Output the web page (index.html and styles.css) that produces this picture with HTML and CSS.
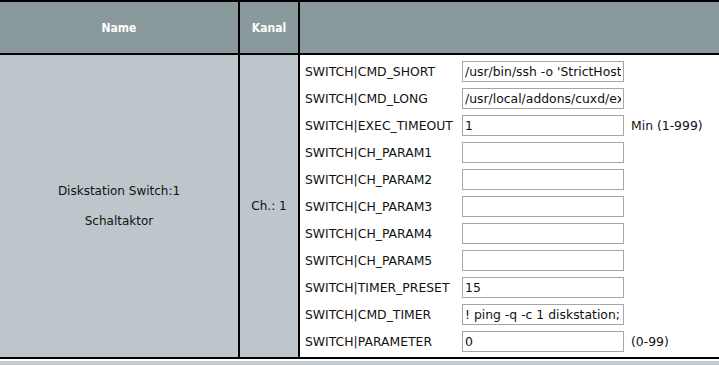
FILE: index.html
```
<!DOCTYPE html>
<html>
<head>
  <title>CUxD Geräteparameter</title>
  <link rel="stylesheet" href="styles.css">
</head>
<body>
  <table class="devices">
    <tr class="head">
      <th class="col-name">Name</th>
      <th class="col-chan">Kanal</th>
      <th class="col-params"></th>
    </tr>
    <tr class="device">
      <td class="col-name">
        <div class="name-box">
          <div>Diskstation Switch:1</div>
          <div>Schaltaktor</div>
        </div>
      </td>
      <td class="col-chan">Ch.: 1</td>
      <td class="col-params">
        <div class="params">
          <span class="lbl">SWITCH|CMD_SHORT</span>
          <input type="text" value="/usr/bin/ssh -o 'StrictHostKeyChecking=no' admin@diskstation">
          <span class="unit"></span>

          <span class="lbl">SWITCH|CMD_LONG</span>
          <input type="text" value="/usr/local/addons/cuxd/extra/wol.sh">
          <span class="unit"></span>

          <span class="lbl">SWITCH|EXEC_TIMEOUT</span>
          <input type="text" value="1">
          <span class="unit">Min (1-999)</span>

          <span class="lbl">SWITCH|CH_PARAM1</span>
          <input type="text" value="">
          <span class="unit"></span>

          <span class="lbl">SWITCH|CH_PARAM2</span>
          <input type="text" value="">
          <span class="unit"></span>

          <span class="lbl">SWITCH|CH_PARAM3</span>
          <input type="text" value="">
          <span class="unit"></span>

          <span class="lbl">SWITCH|CH_PARAM4</span>
          <input type="text" value="">
          <span class="unit"></span>

          <span class="lbl">SWITCH|CH_PARAM5</span>
          <input type="text" value="">
          <span class="unit"></span>

          <span class="lbl">SWITCH|TIMER_PRESET</span>
          <input type="text" value="15">
          <span class="unit"></span>

          <span class="lbl">SWITCH|CMD_TIMER</span>
          <input type="text" value="! ping -q -c 1 diskstation; echo $?">
          <span class="unit"></span>

          <span class="lbl">SWITCH|PARAMETER</span>
          <input type="text" value="0">
          <span class="unit">(0-99)</span>
        </div>
      </td>
    </tr>
  </table>
  <div class="footer-strip"></div>
</body>
</html>
```

FILE: styles.css
```
html { background:#c3cbce; }

body
{
  margin:0;
  font-family:"DejaVu Sans", Verdana, sans-serif;
  font-size:12px;
  color:#111;
  overflow:hidden;
}

table.devices
{
  border-collapse:collapse;
  width:740px;
  border-top:2px solid #000;
  border-bottom:2px solid #000;
  font-size:12px;
}

table.devices th,
table.devices td
{
  padding:0;
}

table.devices .col-name { width:238px; }
table.devices .col-chan { width:58px; border-left:2px solid #000; border-right:2px solid #000; }

tr.head th
{
  height:51px;
  background:#8a999b;
  color:#fff;
  font-family:"DejaVu Sans Condensed", "DejaVu Sans", sans-serif;
  font-stretch:condensed;
  font-weight:bold;
  font-size:12px;
  border-bottom:2px solid #000;
}

tr.device td
{
  background:#bdc7cb;
  text-align:center;
  vertical-align:middle;
}

tr.device td.col-params
{
  background:#fff;
  text-align:left;
  vertical-align:top;
}

.name-box
{
  display:flex;
  flex-direction:column;
  align-items:center;
  gap:16px;
}

.params
{
  display:grid;
  grid-template-columns:157px 162px auto;
  grid-auto-rows:27px;
  align-items:center;
  padding:3px 0 2px 5px;
}

.params .lbl { font-size:12.4px; white-space:nowrap; }

.params input
{
  box-sizing:border-box;
  width:162px;
  height:21px;
  margin:0;
  padding:0 2px;
  border:1px solid #a6a6a6;
  font-family:"DejaVu Sans", Verdana, sans-serif;
  font-size:12.4px;
  color:#111;
  background:#fff;
}

.params .unit { padding-left:7px; font-size:12.4px; white-space:nowrap; }

.footer-strip
{
  height:2px;
  background:#fff;
}
```
